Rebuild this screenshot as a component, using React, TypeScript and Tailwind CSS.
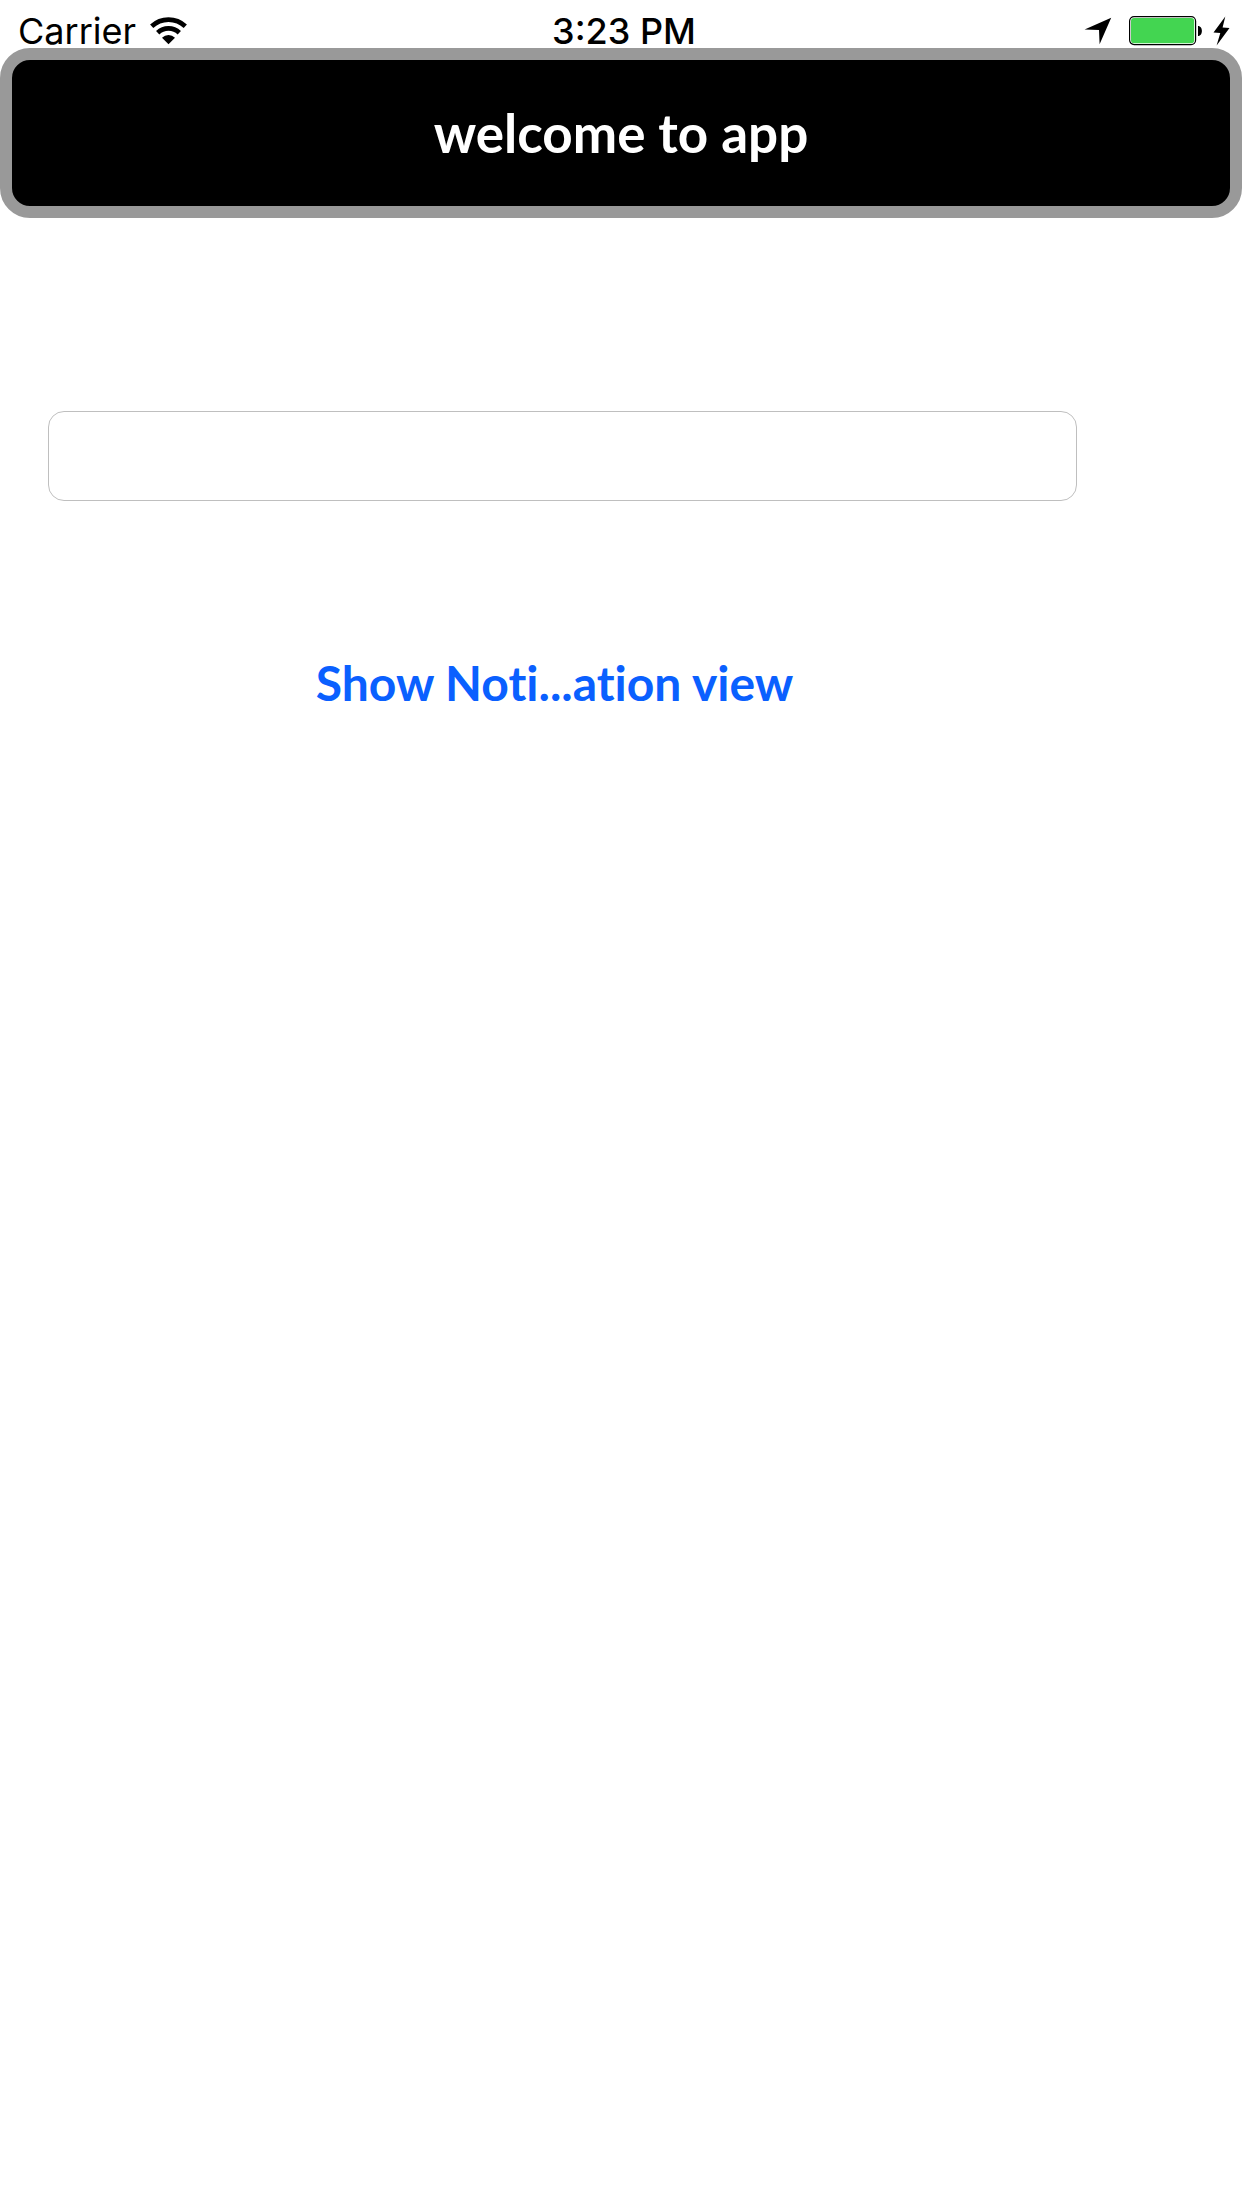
function WifiIcon() {
  return (
    <svg width="37" height="28" viewBox="0 0 37 28" aria-hidden="true">
      <g fill="none" stroke="#000" strokeWidth="4.7">
        <path d="M1.7 9.3A24.5 24.5 0 0 1 35.3 9.3" />
        <path d="M7.7 15.8A15.500 15.500 0 0 1 29.300 15.800" />
      </g>
      <path d="M18.5 27.300L12.000 20.800A9.200 9.200 0 0 1 25.000 20.800Z" />
    </svg>
  );
}

function LocationIcon() {
  return (
    <svg width="28" height="28" viewBox="0 0 28 28" aria-hidden="true">
      <path d="M27.2 0.8L15.6 27.2L15 13L0.6 12.4Z" />
    </svg>
  );
}

function BatteryIcon() {
  return (
    <svg width="74" height="30" viewBox="0 0 74 30" aria-hidden="true">
      <rect x="0.6" y="0.6" width="66" height="28" rx="4.5" fill="#fff" stroke="#000" strokeWidth="1.2" />
      <rect x="2" y="2" width="63.2" height="25.2" rx="3" fill="#43d551" />
      <path d="M69 10C74.2 10 74.2 20 69 20Z" />
    </svg>
  );
}

function BoltIcon() {
  return (
    <svg width="17" height="30" viewBox="0 0 17 30" aria-hidden="true">
      <path d="M12.3 0.5L0.5 16.5L7.3 17L3.6 29.5L16.5 12L9.6 11.6Z" />
    </svg>
  );
}

export default function App() {
  return (
    <div className="min-h-screen bg-white text-black">
      <div className="grid h-12 grid-cols-[1fr_auto_1fr] items-end pr-3 pb-px pl-[18px] font-['Inter',sans-serif] text-4xl">
        <div className="flex h-8 items-center gap-3.5">
          <span className="leading-8">Carrier</span>
          <WifiIcon />
        </div>
        <div className="h-8 leading-8 font-medium">3:23 PM</div>
        <div className="flex h-8 items-center justify-end">
          <LocationIcon />
          <span className="ml-[17px]"><BatteryIcon /></span>
          <span className="ml-2.5"><BoltIcon /></span>
        </div>
      </div>
      <header className="flex h-[170px] items-center justify-center rounded-[30px] border-12 border-[#999999] bg-black">
        <h1 className="font-['Lato',sans-serif] text-[53px] leading-[64px] font-bold text-white">welcome to app</h1>
      </header>
      <main className="flex flex-col pt-[193px] pr-[165px] pl-12">
        <input
          type="text"
          aria-label="Notification text"
          className="h-[90px] w-full rounded-2xl border border-[#bfbfbf] px-5 font-['Inter',sans-serif] text-4xl outline-none"
        />
        <button
          type="button"
          className="mt-[150px] mr-4 self-center font-['Lato',sans-serif] text-5xl leading-[64px] font-bold text-[#0a60ff] [font-variant-ligatures:none]"
        >
          Show Noti...ation view
        </button>
      </main>
    </div>
  );
}
